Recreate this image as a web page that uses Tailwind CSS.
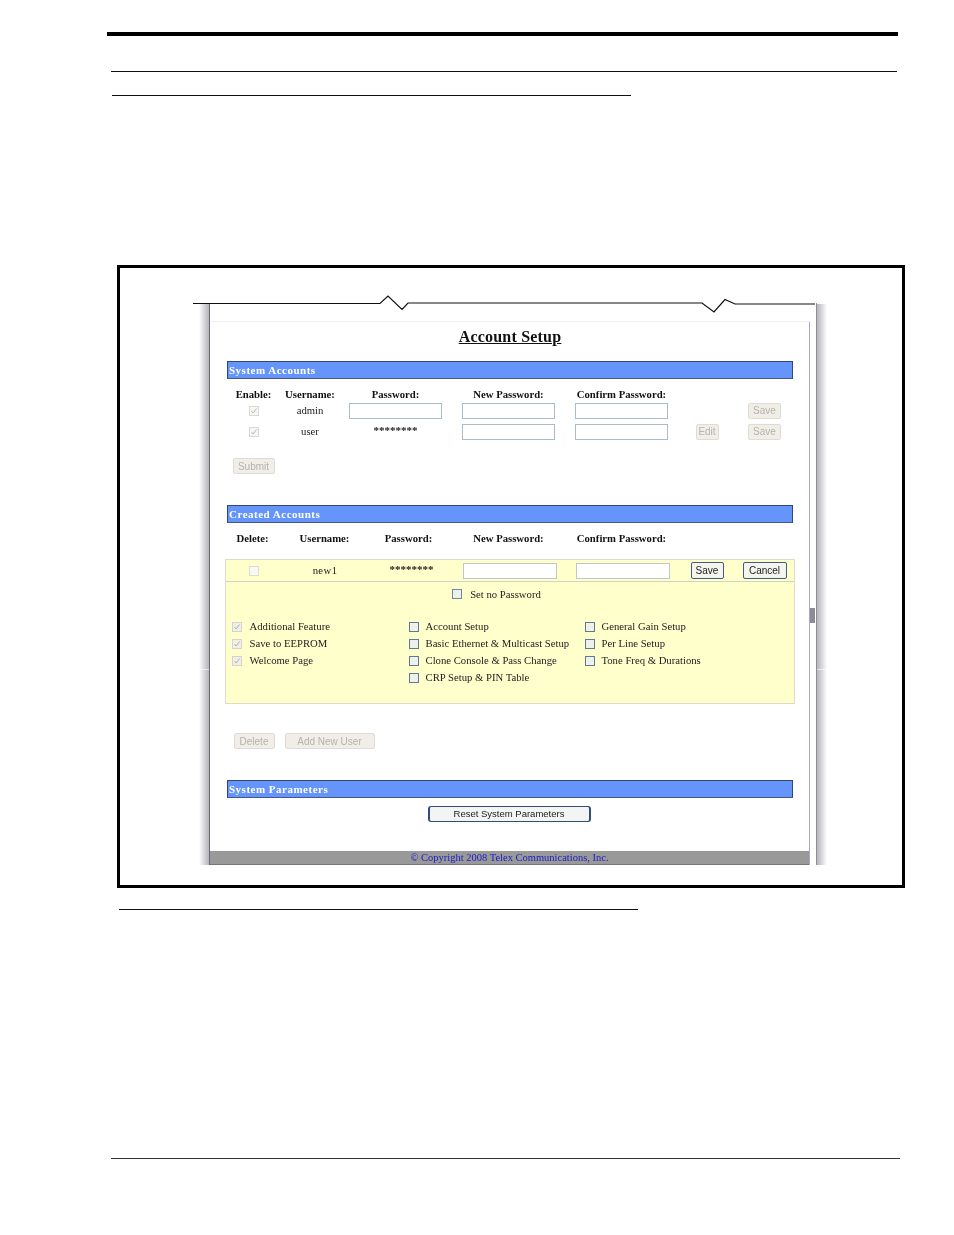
<!DOCTYPE html>
<html lang="en">
<head>
  <meta charset="UTF-8" />
  <title>Account Setup</title>
  <script src="https://cdn.jsdelivr.net/npm/@tailwindcss/browser@4"></script>
</head>
<body class="bg-white">
  <div class="w-[954px] h-[1235px] overflow-hidden font-['Liberation_Serif',serif] text-[#222]">
    <!-- page rules -->
    <div class="ml-[107px] w-[791px] h-[4px] mt-[32px] bg-black"></div>
    <div class="ml-[111px] w-[786px] h-px mt-[35px] bg-[#111]"></div>
    <div class="ml-[112px] w-[519px] h-px mt-[23px] bg-[#111]"></div>

    <!-- figure frame -->
    <div class="relative ml-[117px] mt-[169px] w-[788px] h-[623px] border-[3px] border-black">
      <!-- browser window -->
      <div class="relative ml-[89px] mt-[35px] w-[608px] h-[562px] flex blur-[0.3px]">
        <div class="absolute left-[-10px] top-[1px] w-[10px] h-[561px] bg-gradient-to-l from-[#b4b4bc] to-white"></div>
        <div class="absolute left-[-10px] top-[366px] w-[10px] h-px bg-white/60"></div>
        <div class="absolute left-[608px] top-[1px] w-[10px] h-[561px] bg-gradient-to-r from-[#b4b4bc] to-white"></div>
        <div class="absolute left-[608px] top-[366px] w-[10px] h-px bg-white/60"></div>

        <main class="w-[602px] h-[562px] border-l-[1.5px] border-l-[#6b6b78] flex flex-col">
          <div class="h-[19px] shrink-0 border-b border-[#f0f0f0]"></div>

          <div class="flex-1 flex flex-col border-r border-r-[#a8a8c0] min-h-0">
            <h1 class="h-[30px] shrink-0 pl-[1px] flex items-center justify-center text-[16px] tracking-[0.2px] font-bold underline text-[#111]">Account Setup</h1>

            <div class="pl-[16.5px] flex-1 flex flex-col">
              <!-- system accounts -->
              <div class="mt-[9px] w-[566px] h-[18px] shrink-0 bg-[#6595fb] border border-[#33486e] border-b-[#44598a] flex items-center pl-[1.5px] text-white text-[11px] font-bold tracking-[0.5px]">System Accounts</div>

              <div class="mt-[7px] h-[14px] grid grid-cols-[54px_59px_112px_114px_112px_59px_56px] items-center text-center text-[10.7px] font-bold text-[#111]">
                <span>Enable:</span><span>Username:</span><span>Password:</span><span>New Password:</span><span>Confirm Password:</span>
              </div>

              <div class="mt-[2px] h-[17px] grid grid-cols-[54px_59px_112px_114px_112px_59px_56px] items-center justify-items-center text-[10.7px]">
                <span class="w-[10px] h-[10px] border border-[#d8d8d4] bg-[#f6f6f3] flex items-center justify-center">
                  <svg width="8" height="8" viewBox="0 0 8 8"><path d="M1.5 4 L3.2 6 L6.5 1.5" fill="none" stroke="#b8b8b8" stroke-width="1"/></svg>
                </span>
                <span>admin</span>
                <span class="w-[93px] h-[16px] border-[1.5px] border-[#a8bccb] bg-white"></span>
                <span class="w-[93px] h-[16px] border-[1.5px] border-[#a8bccb] bg-white"></span>
                <span class="w-[93px] h-[16px] border-[1.5px] border-[#a8bccb] bg-white"></span>
                <span></span>
                <span class="w-[33px] h-[16px] rounded-[2px] border border-[#ddddd5] bg-[#f0eee6] text-[#b4b4ac] text-[10px] font-['Liberation_Sans',sans-serif] flex items-center justify-center">Save</span>
              </div>

              <div class="mt-[4px] h-[17px] grid grid-cols-[54px_59px_112px_114px_112px_59px_56px] items-center justify-items-center text-[10.7px]">
                <span class="w-[10px] h-[10px] border border-[#d8d8d4] bg-[#f6f6f3] flex items-center justify-center">
                  <svg width="8" height="8" viewBox="0 0 8 8"><path d="M1.5 4 L3.2 6 L6.5 1.5" fill="none" stroke="#b8b8b8" stroke-width="1"/></svg>
                </span>
                <span>user</span>
                <span class="text-[11px] font-bold -mt-[2px]">********</span>
                <span class="w-[93px] h-[16px] border-[1.5px] border-[#a8bccb] bg-white"></span>
                <span class="w-[93px] h-[16px] border-[1.5px] border-[#a8bccb] bg-white"></span>
                <span class="w-[23px] h-[16px] rounded-[2px] border border-[#ddddd5] bg-[#f0eee6] text-[#b4b4ac] text-[10px] font-['Liberation_Sans',sans-serif] flex items-center justify-center">Edit</span>
                <span class="w-[33px] h-[16px] rounded-[2px] border border-[#ddddd5] bg-[#f0eee6] text-[#b4b4ac] text-[10px] font-['Liberation_Sans',sans-serif] flex items-center justify-center">Save</span>
              </div>

              <div class="mt-[18px] ml-[6px] w-[42px] h-[16px] shrink-0 rounded-[2px] border border-[#ddddd5] bg-[#f0eee6] text-[#b4b4ac] text-[10px] font-['Liberation_Sans',sans-serif] flex items-center justify-center">Submit</div>

              <!-- created accounts -->
              <div class="mt-[31px] w-[566px] h-[18px] shrink-0 bg-[#6595fb] border border-[#33486e] border-b-[#44598a] flex items-center pl-[1.5px] text-white text-[11px] font-bold tracking-[0.5px]">Created Accounts</div>

              <div class="mt-[7px] h-[14px] grid grid-cols-[52px_92px_76px_124px_102px] items-center text-center text-[10.7px] font-bold text-[#111]">
                <span>Delete:</span><span>Username:</span><span>Password:</span><span>New Password:</span><span>Confirm Password:</span>
              </div>

              <div class="mt-[15px] -ml-[2px] w-[570px] h-[145px] shrink-0 bg-[#ffffcc] border border-[#dcdcc8] flex flex-col">
                <div class="h-[22px] shrink-0 border-b border-[#cfd3c8] grid grid-cols-[57px_85px_88px_108px_118px_51px_64px] items-center justify-items-center text-[10.7px]">
                  <span class="w-[10px] h-[10px] border border-[#ddddd8] bg-[#f8f8f4]"></span>
                  <span class="tracking-[0.4px]">new1</span>
                  <span class="text-[11px] font-bold -mt-[3px]">********</span>
                  <span class="w-[94px] h-[16px] border-[1.5px] border-[#c0c8c8] bg-white"></span>
                  <span class="w-[94px] h-[16px] border-[1.5px] border-[#c0c8c8] bg-white"></span>
                  <span class="w-[33px] h-[17px] rounded-[2px] border border-[#3e5f7c] bg-[#f4f4ee] text-[#222] text-[10px] font-['Liberation_Sans',sans-serif] flex items-center justify-center">Save</span>
                  <span class="w-[44px] h-[17px] rounded-[2px] border border-[#3e5f7c] bg-[#f4f4ee] text-[#222] text-[10px] font-['Liberation_Sans',sans-serif] flex items-center justify-center">Cancel</span>
                </div>

                <div class="mt-[5px] h-[14px] flex items-center justify-center gap-[8px] text-[10.7px] pr-[26px]">
                  <span class="w-[10px] h-[10px] border border-[#6d8aa0] bg-[#eef0ec]"></span>
                  <span>Set no Password</span>
                </div>

                <div class="mt-[17px] ml-[6px] grid grid-cols-[177px_176px_1fr] text-[10.7px]">
                  <div class="flex flex-col">
                    <div class="h-[17px] flex items-center gap-[8px]">
                      <span class="w-[10px] h-[10px] border border-[#d4d4cc] bg-[#f0f0e8] flex items-center justify-center">
                        <svg width="8" height="8" viewBox="0 0 8 8"><path d="M1.5 4 L3.2 6 L6.5 1.5" fill="none" stroke="#b0b0b0" stroke-width="1"/></svg>
                      </span>Additional Feature
                    </div>
                    <div class="h-[17px] flex items-center gap-[8px]">
                      <span class="w-[10px] h-[10px] border border-[#d4d4cc] bg-[#f0f0e8] flex items-center justify-center">
                        <svg width="8" height="8" viewBox="0 0 8 8"><path d="M1.5 4 L3.2 6 L6.5 1.5" fill="none" stroke="#b0b0b0" stroke-width="1"/></svg>
                      </span>Save to EEPROM
                    </div>
                    <div class="h-[17px] flex items-center gap-[8px]">
                      <span class="w-[10px] h-[10px] border border-[#d4d4cc] bg-[#f0f0e8] flex items-center justify-center">
                        <svg width="8" height="8" viewBox="0 0 8 8"><path d="M1.5 4 L3.2 6 L6.5 1.5" fill="none" stroke="#b0b0b0" stroke-width="1"/></svg>
                      </span>Welcome Page
                    </div>
                  </div>
                  <div class="flex flex-col">
                    <div class="h-[17px] flex items-center gap-[7px]"><span class="w-[10px] h-[10px] border border-[#5c7c94] bg-[#eef0ec]"></span>Account Setup</div>
                    <div class="h-[17px] flex items-center gap-[7px]"><span class="w-[10px] h-[10px] border border-[#5c7c94] bg-[#eef0ec]"></span>Basic Ethernet &amp; Multicast Setup</div>
                    <div class="h-[17px] flex items-center gap-[7px]"><span class="w-[10px] h-[10px] border border-[#5c7c94] bg-[#eef0ec]"></span>Clone Console &amp; Pass Change</div>
                    <div class="h-[17px] flex items-center gap-[7px]"><span class="w-[10px] h-[10px] border border-[#5c7c94] bg-[#eef0ec]"></span>CRP Setup &amp; PIN Table</div>
                  </div>
                  <div class="flex flex-col">
                    <div class="h-[17px] flex items-center gap-[7px]"><span class="w-[10px] h-[10px] border border-[#5c7c94] bg-[#eef0ec]"></span>General Gain Setup</div>
                    <div class="h-[17px] flex items-center gap-[7px]"><span class="w-[10px] h-[10px] border border-[#5c7c94] bg-[#eef0ec]"></span>Per Line Setup</div>
                    <div class="h-[17px] flex items-center gap-[7px]"><span class="w-[10px] h-[10px] border border-[#5c7c94] bg-[#eef0ec]"></span>Tone Freq &amp; Durations</div>
                  </div>
                </div>
              </div>

              <div class="mt-[29px] ml-[7px] flex gap-[10px] shrink-0">
                <span class="w-[41px] h-[16px] rounded-[2px] border border-[#ddddd5] bg-[#f0eee6] text-[#b4b4ac] text-[10px] font-['Liberation_Sans',sans-serif] flex items-center justify-center">Delete</span>
                <span class="w-[90px] h-[16px] rounded-[2px] border border-[#ddddd5] bg-[#f0eee6] text-[#b4b4ac] text-[10px] font-['Liberation_Sans',sans-serif] flex items-center justify-center">Add New User</span>
              </div>

              <!-- system parameters -->
              <div class="mt-[31px] w-[566px] h-[18px] shrink-0 bg-[#6595fb] border border-[#33486e] border-b-[#44598a] flex items-center pl-[1.5px] text-white text-[11px] font-bold tracking-[0.5px]">System Parameters</div>

              <div class="mt-[8px] ml-[201px] w-[163px] h-[16px] shrink-0 rounded-[3px] border border-[#2e4f78] border-l-2 border-r-2 bg-[#f4f4f2] text-[#222] text-[9.5px] font-['Liberation_Sans',sans-serif] flex items-center justify-center">Reset System Parameters</div>
            </div>

            <footer class="h-[14px] shrink-0 pt-[1px] bg-[#999999] border-b border-[#777] flex items-center justify-center text-[10.5px] text-[#1c1cc8]">© Copyright 2008 Telex Communications, Inc.</footer>
          </div>
        </main>

        <!-- scroll gutter -->
        <div class="relative w-[6px] h-[562px]">
          <div class="absolute left-0 top-[305px] w-[5px] h-[15px] bg-[#8c8c94]"></div>
        </div>
        <div class="w-px h-[562px] bg-[#8e8e98]"></div>
      </div>

      <!-- torn edge of the screenshot -->
      <svg class="absolute left-[-3px] top-[-3px] w-[788px] h-[623px]" viewBox="117 265 788 623" fill="none">
        <path d="M193 303.5 H380 L388 296 L402 309.5 L408 303 H702 L714 312 L725 299.5 L735 304 H815" stroke="#111" stroke-width="1.2"/>
      </svg>
    </div>

    <div class="ml-[119px] w-[519px] h-px mt-[21px] bg-[#111]"></div>
    <div class="ml-[111px] w-[789px] h-px mt-[248px] bg-[#333]"></div>
  </div>
</body>
</html>
